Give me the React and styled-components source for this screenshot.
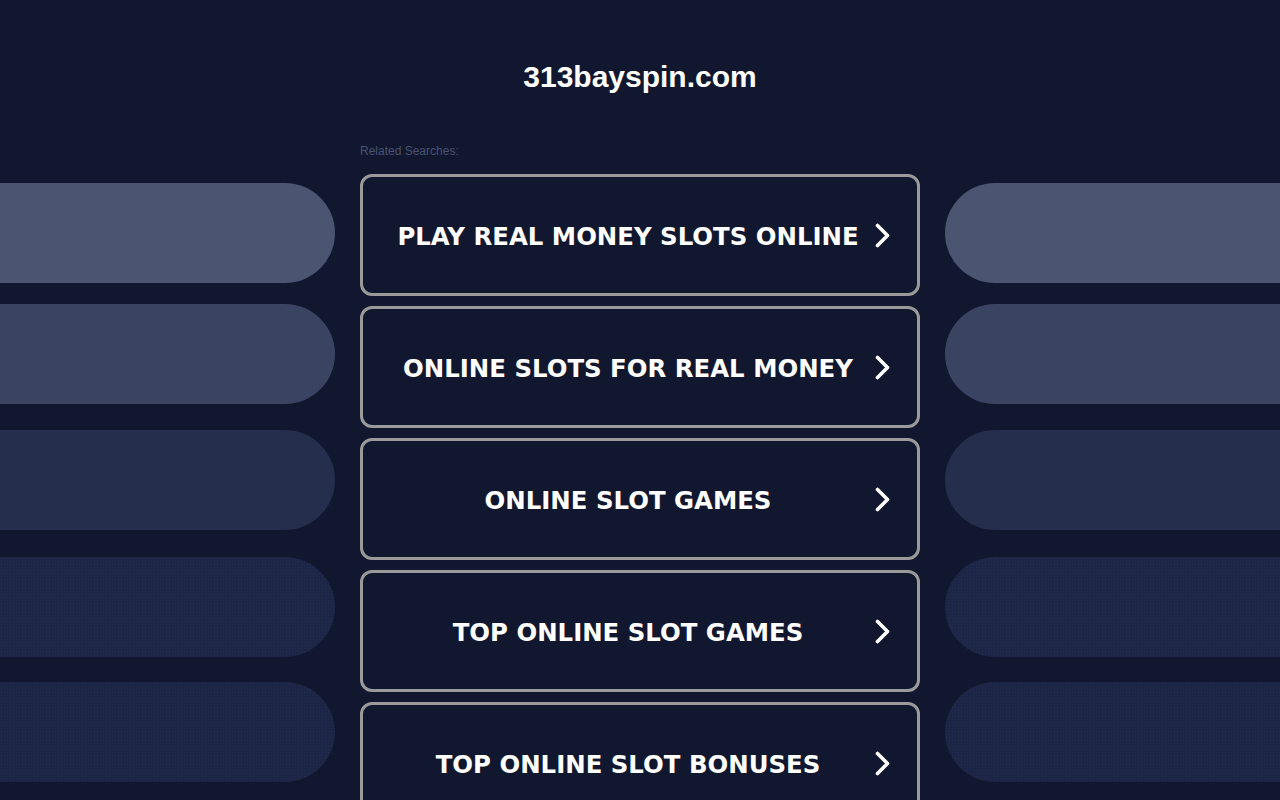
import React from 'react'
import styled, {createGlobalStyle, css} from 'styled-components'

const GlobalStyle = createGlobalStyle`
  html, body {
    margin: 0;
    padding: 0;
    background: #11172e;
    overflow: hidden;
  }
  * {
    box-sizing: border-box;
  }
`

const searches = [
  'PLAY REAL MONEY SLOTS ONLINE',
  'ONLINE SLOTS FOR REAL MONEY',
  'ONLINE SLOT GAMES',
  'TOP ONLINE SLOT GAMES',
  'TOP ONLINE SLOT BONUSES',
]

// decorative side bars, top to bottom
const pills = [
  {color: '#4b5572', offset: 0},
  {color: '#3a4462', offset: 21},
  {color: '#252e4d', offset: 26},
  {color: '#1d2647', offset: 27, dotted: true},
  {color: '#1c2546', offset: 25, dotted: true},
]

const App = () => (
  <Page>
    <GlobalStyle />
    <Header>313bayspin.com</Header>
    <Layout>
      <SideColumn>
        {pills.map((p, i) => (
          <Pill key={i} side="left" color={p.color} offset={p.offset} dotted={p.dotted} />
        ))}
      </SideColumn>
      <Center>
        <Caption>Related Searches:</Caption>
        <List>
          {searches.map((s) => (
            <SearchButton key={s} href="#">
              <Label>{s}</Label>
              <Chevron />
            </SearchButton>
          ))}
        </List>
      </Center>
      <SideColumn>
        {pills.map((p, i) => (
          <Pill key={i} side="right" color={p.color} offset={p.offset} dotted={p.dotted} />
        ))}
      </SideColumn>
    </Layout>
  </Page>
)

const Chevron = () => (
  <ChevronSvg viewBox="0 0 15 25" width="15" height="25">
    <path
      d="M2.5 2.5 L12.5 12.5 L2.5 22.5"
      fill="none"
      stroke="#fff"
      strokeWidth="3.6"
      strokeLinecap="round"
      strokeLinejoin="round"
    />
  </ChevronSvg>
)

const Page = styled.div`
  min-height: 800px;
  background: #11172e;
  font-family: 'Liberation Sans', Arial, sans-serif;
`

const Header = styled.h1`
  margin: 0;
  padding-top: 59px;
  height: 140px;
  text-align: center;
  color: #fff;
  font-size: 30px;
  font-weight: 700;
  line-height: 36px;
`

const Layout = styled.div`
  display: grid;
  grid-template-columns: 1fr 560px 1fr;
  column-gap: 25px;
`

const SideColumn = styled.div`
  display: flex;
  flex-direction: column;
  padding-top: 43px;
`

const Pill = styled.div`
  height: 100px;
  margin-top: ${(p) => p.offset}px;
  background-color: ${(p) => p.color};
  ${(p) =>
    p.side === 'left'
      ? css`border-radius: 0 50px 50px 0;`
      : css`border-radius: 50px 0 0 50px;`}
  ${(p) =>
    p.dotted &&
    css`
      background-image: radial-gradient(rgba(60, 75, 115, 0.22) 0.7px, transparent 0.8px);
      background-size: 3px 3px;
    `}
`

const Center = styled.div`
  display: flex;
  flex-direction: column;
`

const Caption = styled.div`
  height: 34px;
  padding-top: 4px;
  color: #4a5372;
  font-size: 12px;
  line-height: 14px;
`

const List = styled.div`
  display: flex;
  flex-direction: column;
  gap: 10px;
`

const SearchButton = styled.a`
  display: flex;
  align-items: center;
  height: 122px;
  padding: 0 27px;
  border: 3px solid #9a9a9a;
  border-radius: 12px;
  background: #11172e;
  text-decoration: none;
  flex-shrink: 0;
`

const Label = styled.span`
  flex: 1;
  padding-top: 4px;
  text-align: center;
  color: #fff;
  font-family: 'DejaVu Sans', Verdana, sans-serif;
  font-weight: 700;
  font-size: 24.4px;
  line-height: 28px;
  white-space: nowrap;
`

const ChevronSvg = styled.svg`
  display: block;
  margin-left: 9px;
  flex-shrink: 0;
`

export default App
